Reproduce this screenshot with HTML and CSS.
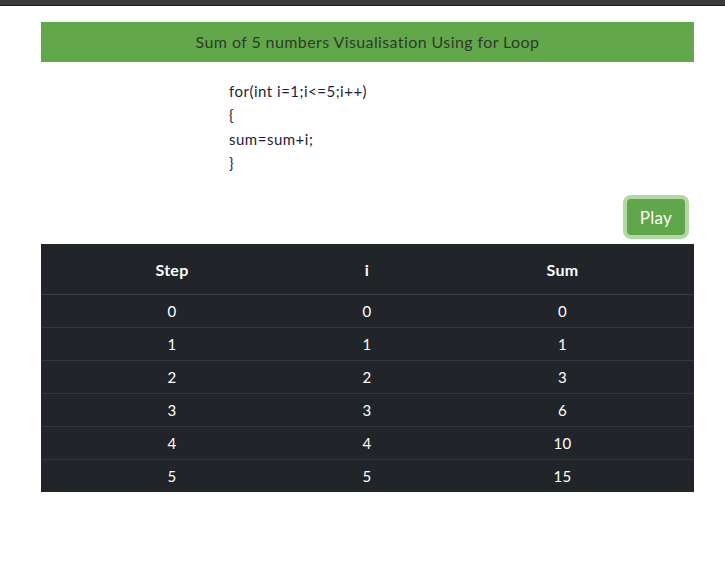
FILE: index.html
```html
<!DOCTYPE html>
<html>
<head>
<meta charset="utf-8">
<link rel="stylesheet" href="styles.css">
</head>
<body>
<div class="topbar"></div>
<div class="container">
  <div class="title">Sum of 5 numbers Visualisation Using for Loop</div>
  <div class="code">
    <div>for(int i=1;i&lt;=5;i++)</div>
    <div>{</div>
    <div>sum=sum+i;</div>
    <div>}</div>
  </div>
  <div class="actions"><button class="play">Play</button></div>
  <table class="grid">
    <thead>
      <tr><th class="c1">Step</th><th class="c2">i</th><th class="c3">Sum</th></tr>
    </thead>
    <tbody>
      <tr><td>0</td><td>0</td><td>0</td></tr>
      <tr><td>1</td><td>1</td><td>1</td></tr>
      <tr><td>2</td><td>2</td><td>3</td></tr>
      <tr><td>3</td><td>3</td><td>6</td></tr>
      <tr><td>4</td><td>4</td><td>10</td></tr>
      <tr><td>5</td><td>5</td><td>15</td></tr>
    </tbody>
  </table>
</div>
</body>
</html>
```
FILE: styles.css
```css
html, body {
  margin: 0;
  padding: 0;
  background: #ffffff;
  font-family: Lato, "Open Sans", sans-serif;
}
.topbar {
  height: 5px;
  background: #3a3a3a;
  border-bottom: 1px solid #1f1f1f;
}
.container {
  width: 653px;
  margin: 16px 0 0 41px;
}
.title {
  height: 40px;
  line-height: 40px;
  background: #63a74b;
  color: #2f3a2c;
  text-align: center;
  font-size: 16px;
  letter-spacing: 0.4px;
}
.code {
  margin-top: 17px;
  padding-left: 188px;
  font-size: 15px;
  line-height: 24px;
  color: #1c1e3a;
  letter-spacing: 0.5px;
}
.actions {
  display: flex;
  justify-content: flex-end;
  margin-top: 20px;
  padding-right: 5px;
  margin-bottom: 5px;
}
.play {
  font-family: inherit;
  background: #5fa74a;
  color: #ffffff;
  font-size: 17px;
  letter-spacing: 0.3px;
  border: none;
  border-radius: 4px;
  width: 58px;
  height: 36px;
  box-shadow: 0 0 0 4px #b2d8a6;
  margin: 4px;
  padding: 0;
}
.grid {
  width: 653px;
  border-collapse: collapse;
  background: #212529;
  color: #ffffff;
  table-layout: fixed;
}
.grid th {
  height: 50px;
  font-weight: bold;
  font-size: 16px;
  letter-spacing: 0.3px;
  text-align: center;
  border-bottom: 1px solid #383d44;
  padding: 0;
}
.grid td {
  height: 32px;
  font-size: 15px;
  letter-spacing: 0.3px;
  text-align: center;
  border-bottom: 1px solid #33383e;
  padding: 0;
}
.grid tbody tr:last-child td {
  border-bottom: none;
  height: 32px;
}
.c1 { width: 262px; }
.c2 { width: 128px; }
.c3 { width: 263px; }
```
